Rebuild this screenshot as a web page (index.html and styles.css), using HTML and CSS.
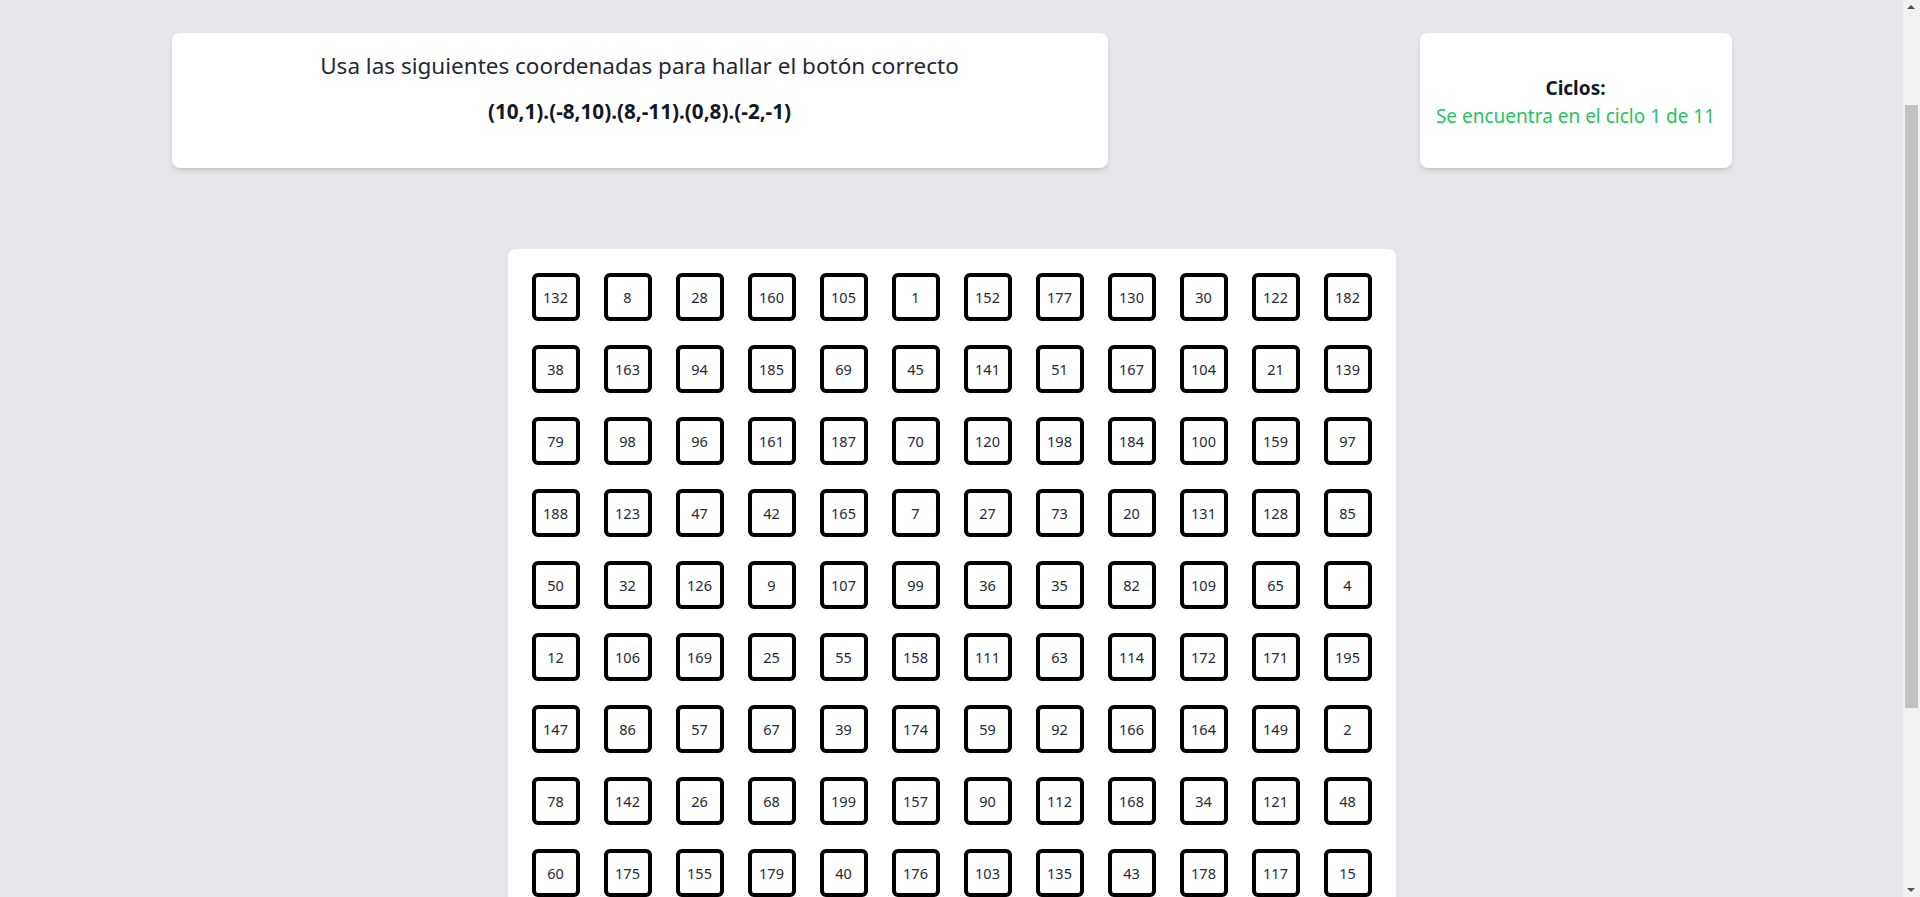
FILE: index.html
```html
<!DOCTYPE html>
<html lang="es">
<head>
<meta charset="utf-8">
<title>Coordenadas</title>
<link rel="stylesheet" href="styles.css">
</head>
<body>
<main class="page">
  <section class="top">
    <div class="card card-clue">
      <h1 class="clue-title">Usa las siguientes coordenadas para hallar el botón correcto</h1>
      <p class="clue-coords">(10,1).(-8,10).(8,-11).(0,8).(-2,-1)</p>
    </div>
    <div class="card card-cycle">
      <p class="cycle-label">Ciclos:</p>
      <p class="cycle-value">Se encuentra en el ciclo 1 de 11</p>
    </div>
  </section>
  <section class="board">
    <button class="cell">132</button><button class="cell">8</button><button class="cell">28</button><button class="cell">160</button><button class="cell">105</button><button class="cell">1</button><button class="cell">152</button><button class="cell">177</button><button class="cell">130</button><button class="cell">30</button><button class="cell">122</button><button class="cell">182</button>
    <button class="cell">38</button><button class="cell">163</button><button class="cell">94</button><button class="cell">185</button><button class="cell">69</button><button class="cell">45</button><button class="cell">141</button><button class="cell">51</button><button class="cell">167</button><button class="cell">104</button><button class="cell">21</button><button class="cell">139</button>
    <button class="cell">79</button><button class="cell">98</button><button class="cell">96</button><button class="cell">161</button><button class="cell">187</button><button class="cell">70</button><button class="cell">120</button><button class="cell">198</button><button class="cell">184</button><button class="cell">100</button><button class="cell">159</button><button class="cell">97</button>
    <button class="cell">188</button><button class="cell">123</button><button class="cell">47</button><button class="cell">42</button><button class="cell">165</button><button class="cell">7</button><button class="cell">27</button><button class="cell">73</button><button class="cell">20</button><button class="cell">131</button><button class="cell">128</button><button class="cell">85</button>
    <button class="cell">50</button><button class="cell">32</button><button class="cell">126</button><button class="cell">9</button><button class="cell">107</button><button class="cell">99</button><button class="cell">36</button><button class="cell">35</button><button class="cell">82</button><button class="cell">109</button><button class="cell">65</button><button class="cell">4</button>
    <button class="cell">12</button><button class="cell">106</button><button class="cell">169</button><button class="cell">25</button><button class="cell">55</button><button class="cell">158</button><button class="cell">111</button><button class="cell">63</button><button class="cell">114</button><button class="cell">172</button><button class="cell">171</button><button class="cell">195</button>
    <button class="cell">147</button><button class="cell">86</button><button class="cell">57</button><button class="cell">67</button><button class="cell">39</button><button class="cell">174</button><button class="cell">59</button><button class="cell">92</button><button class="cell">166</button><button class="cell">164</button><button class="cell">149</button><button class="cell">2</button>
    <button class="cell">78</button><button class="cell">142</button><button class="cell">26</button><button class="cell">68</button><button class="cell">199</button><button class="cell">157</button><button class="cell">90</button><button class="cell">112</button><button class="cell">168</button><button class="cell">34</button><button class="cell">121</button><button class="cell">48</button>
    <button class="cell">60</button><button class="cell">175</button><button class="cell">155</button><button class="cell">179</button><button class="cell">40</button><button class="cell">176</button><button class="cell">103</button><button class="cell">135</button><button class="cell">43</button><button class="cell">178</button><button class="cell">117</button><button class="cell">15</button>
    <button class="cell">5</button><button class="cell">118</button><button class="cell">76</button><button class="cell">144</button><button class="cell">91</button><button class="cell">13</button><button class="cell">190</button><button class="cell">62</button><button class="cell">137</button><button class="cell">81</button><button class="cell">23</button><button class="cell">153</button>
    <button class="cell">110</button><button class="cell">44</button><button class="cell">181</button><button class="cell">17</button><button class="cell">129</button><button class="cell">88</button><button class="cell">54</button><button class="cell">196</button><button class="cell">3</button><button class="cell">145</button><button class="cell">71</button><button class="cell">115</button>
    <button class="cell">37</button><button class="cell">192</button><button class="cell">64</button><button class="cell">101</button><button class="cell">14</button><button class="cell">150</button><button class="cell">83</button><button class="cell">19</button><button class="cell">173</button><button class="cell">58</button><button class="cell">136</button><button class="cell">200</button>
  </section>
</main>
<div class="scrollbar" aria-hidden="true">
  <span class="scroll-arrow scroll-up"></span>
  <span class="scroll-thumb"></span>
  <span class="scroll-arrow scroll-down"></span>
</div>
</body>
</html>
```

FILE: styles.css
```css
* { box-sizing: border-box; }

html, body {
  margin: 0;
  padding: 0;
}

body {
  background: #e5e7eb;
  font-family: "Noto Sans", "Open Sans", "Liberation Sans", sans-serif;
  color: #111827;
}

.page {
  padding: 33px 0 15px;
  margin-right: 17px;
}

.top {
  width: 1560px;
  margin: 0 auto;
  display: grid;
  grid-template-columns: repeat(5, 1fr);
}

.card {
  background: #ffffff;
  border-radius: 8px;
  box-shadow: 0 4px 6px -1px rgba(0,0,0,0.1), 0 2px 4px -2px rgba(0,0,0,0.1);
  height: 135px;
  text-align: center;
}

.card-clue {
  grid-column: 1 / span 3;
  padding: 17px 20px 20px;
}

.clue-title {
  margin: 0;
  font-size: 22.5px;
  line-height: 32px;
  font-weight: 400;
  color: #1f2937;
}

.clue-coords {
  margin: 15px 0 0;
  font-size: 20.7px;
  line-height: 28px;
  font-weight: 700;
  color: #111827;
}

.card-cycle {
  grid-column: 5 / span 1;
  display: flex;
  flex-direction: column;
  justify-content: center;
  padding-top: 2px;
}

.cycle-label {
  margin: 0;
  font-size: 19px;
  line-height: 28px;
  font-weight: 700;
  color: #111827;
}

.cycle-value {
  margin: 0;
  font-size: 19px;
  line-height: 28px;
  color: #22c55e;
}

.board {
  width: 888px;
  margin: 81px auto 0;
  padding: 24px;
  background: #ffffff;
  border-radius: 8px;
  display: grid;
  grid-template-columns: repeat(12, 48px);
  gap: 24px;
}

.cell {
  width: 48px;
  height: 48px;
  padding: 0;
  border: 4px solid #000000;
  border-radius: 6px;
  background: #ffffff;
  font-family: inherit;
  font-size: 14.5px;
  color: #1f2937;
  cursor: pointer;
}

/* imitation of the classic browser scrollbar seen in the capture */
.scrollbar {
  position: fixed;
  top: 0;
  right: 0;
  width: 17px;
  height: 100vh;
  background: #f1f1f1;
}

.scroll-thumb {
  position: absolute;
  left: 2px;
  right: 2px;
  top: 105px;
  height: 603px;
  background: #c1c1c1;
}

.scroll-arrow {
  position: absolute;
  left: 4px;
  width: 0;
  height: 0;
  border-left: 4.5px solid transparent;
  border-right: 4.5px solid transparent;
}

.scroll-up {
  top: 5px;
  border-bottom: 4px solid #505050;
}

.scroll-down {
  bottom: 5px;
  border-top: 4px solid #505050;
}
```
